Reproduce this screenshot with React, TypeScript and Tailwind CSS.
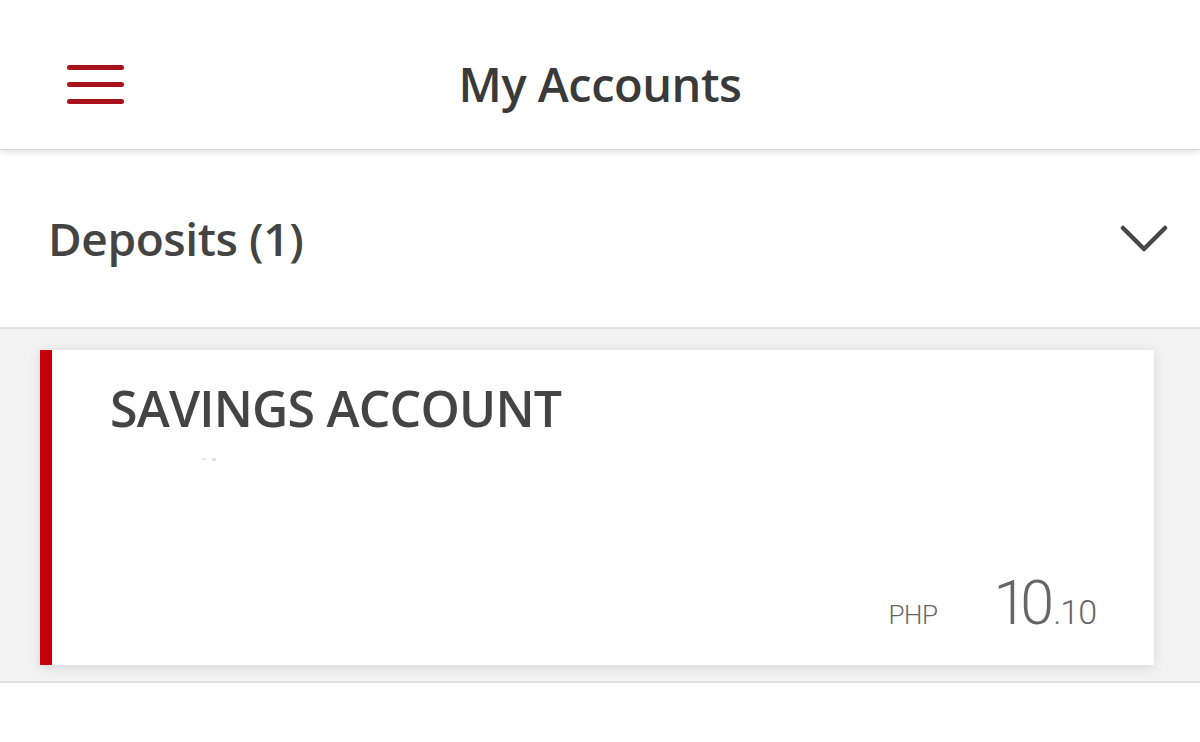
const HEAD_FONT = { fontFamily: '"Open Sans", "Noto Sans", sans-serif' };
const NUM_FONT = { fontFamily: 'Roboto, "Open Sans", sans-serif' };

const MenuButton = () => (
  <button className="mt-[20px] flex w-[57px] flex-col gap-[12px]">
    <span className="block h-[5px] w-full rounded-full bg-[#a8121b]" />
    <span className="block h-[5px] w-full rounded-full bg-[#a8121b]" />
    <span className="block h-[5px] w-full rounded-full bg-[#a8121b]" />
  </button>
);

const Chevron = () => (
  <svg width="48" height="30" viewBox="0 0 48 30" fill="none" className="text-[#474747]">
    <polyline
      points="3,4 24,25 45,4"
      stroke="currentColor"
      strokeWidth="4.5"
      strokeLinecap="round"
      strokeLinejoin="round"
    />
  </svg>
);

const AccountCard = () => (
  <div className="flex h-[315px] bg-white shadow-[0_2px_12px_rgba(0,0,0,0.12)]">
    <div className="w-[12px] bg-[#c4000d]" />
    <div className="flex flex-1 flex-col pl-[58px] pr-[58px]">
      <h2
        className="mt-[22px] text-[50px] font-semibold tracking-[-0.8px] text-[#444444] leading-[72px]"
        style={HEAD_FONT}
      >
        SAVINGS ACCOUNT
      </h2>
      <div className="ml-[92px] mt-[14px] flex gap-[6px]">
        <span className="block h-[2px] w-[4px] rounded-full bg-[#e6e6e6]" />
        <span className="block h-[3px] w-[4px] rounded-full bg-[#d8d8d8]" />
      </div>
      <div className="mt-auto mb-[27px] flex items-baseline justify-end" style={NUM_FONT}>
        <span className="text-[26px] font-light tracking-[-0.5px] text-[#666666]">PHP</span>
        <span className="ml-[56px] text-[61px] font-light leading-none tracking-[-7px] text-[#666666]">10</span>
        <span className="ml-[6px] text-[34px] font-light tracking-[-1px] text-[#666666]">.10</span>
      </div>
    </div>
  </div>
);

export default function App() {
  return (
    <div className="flex h-[742px] w-[1200px] flex-col overflow-hidden bg-white">
      {/* Header */}
      <header className="relative z-10 flex h-[150px] items-center border-b border-[#d6d6d6] bg-white px-[67px] shadow-[0_3px_6px_rgba(0,0,0,0.10)]">
        <MenuButton />
        <h1
          className="absolute left-1/2 top-[52px] -translate-x-1/2 text-[47px] font-semibold tracking-[-0.5px] text-[#3a3a3a] leading-[64px]"
          style={HEAD_FONT}
        >
          My Accounts
        </h1>
      </header>

      {/* Deposits header */}
      <div className="flex h-[179px] items-center justify-between border-b-2 border-[#e2e2e2] bg-white pl-[48px] pr-[32px]">
        <span
          className="text-[46px] font-semibold tracking-[-0.4px] text-[#444444]"
          style={HEAD_FONT}
        >
          Deposits (1)
        </span>
        <Chevron />
      </div>

      {/* Account list */}
      <div className="border-b-2 border-[#e0e0e0] bg-[#f3f3f3] pb-[16px] pl-[40px] pr-[46px] pt-[21px]">
        <AccountCard />
      </div>

      <div className="flex-1 bg-white" />
    </div>
  );
}
